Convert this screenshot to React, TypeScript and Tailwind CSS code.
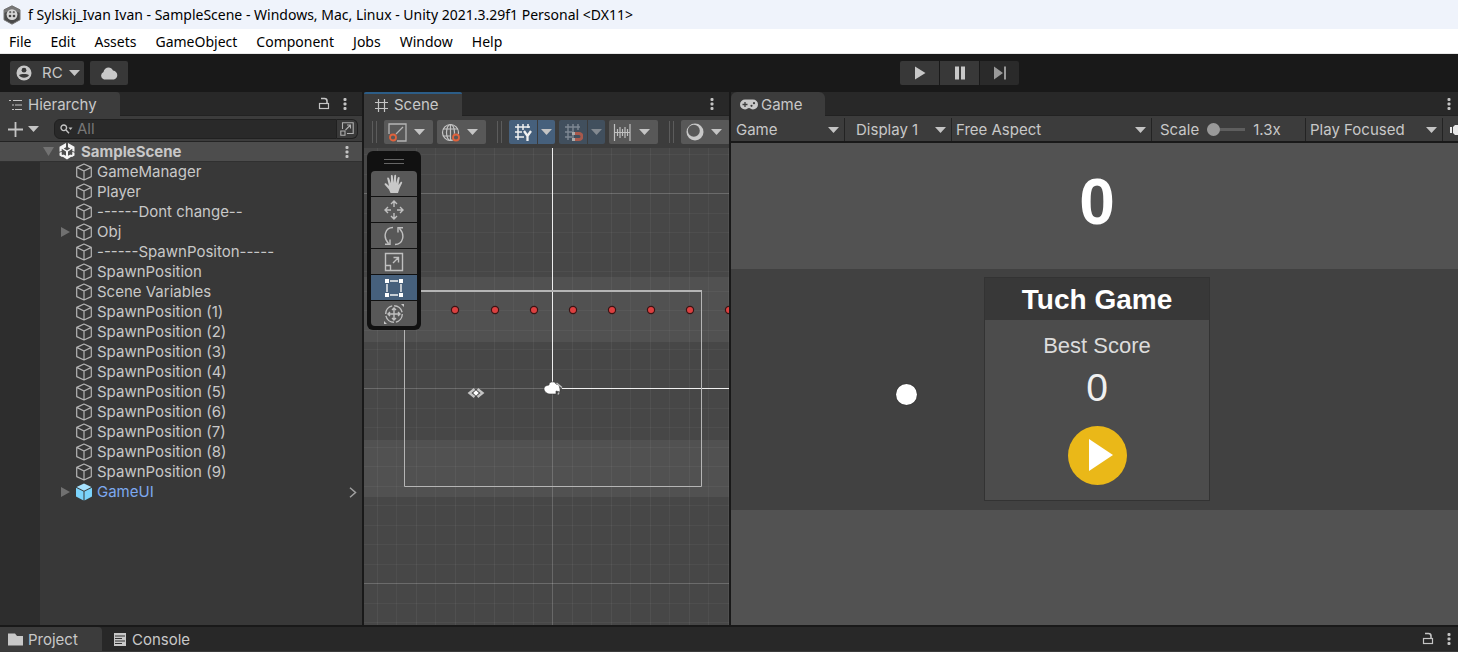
import type { ReactNode } from "react";

const menus = ["File", "Edit", "Assets", "GameObject", "Component", "Jobs", "Window", "Help"];

type Item = { name: string; expandable?: boolean; prefab?: boolean };

const items: Item[] = [
  { name: "GameManager" },
  { name: "Player" },
  { name: "------Dont change--" },
  { name: "Obj", expandable: true },
  { name: "------SpawnPositon-----" },
  { name: "SpawnPosition" },
  { name: "Scene Variables" },
  ...Array.from({ length: 9 }, (_, i) => ({ name: `SpawnPosition (${i + 1})` })),
  { name: "GameUI", expandable: true, prefab: true },
];

function Caret({ className = "" }: { className?: string }) {
  return (
    <svg width="11" height="6" viewBox="0 0 11 6" className={`shrink-0 ${className}`} aria-hidden="true">
      <path d="M0 0h11L5.5 6z" fill="#c4c4c4" />
    </svg>
  );
}

function Kebab() {
  return (
    <svg width="4" height="14" viewBox="0 0 4 14" fill="#c4c4c4" aria-hidden="true">
      <rect x="0.5" y="1" width="3" height="3" rx="1" />
      <rect x="0.5" y="5.5" width="3" height="3" rx="1" />
      <rect x="0.5" y="10" width="3" height="3" rx="1" />
    </svg>
  );
}

function Lock() {
  return (
    <svg width="12" height="14" viewBox="0 0 12 14" fill="none" stroke="#c4c4c4" strokeWidth="1.2" aria-hidden="true">
      <rect x="1.5" y="6.500" width="9" height="5" />
      <path d="M3 1.500h3.500a2.500 2.500 0 0 1 2.500 2.500v2.500" strokeWidth="1.600" />
    </svg>
  );
}

function Cube({ prefab }: { prefab?: boolean }) {
  if (prefab) {
    return (
      <svg width="18" height="18" viewBox="0 0 18 18" aria-hidden="true">
        <path d="M9 0.6l7.4 3.4L9 7.8 1.6 4z" fill="#a6e2ff" />
        <path d="M1 4.8l7.5 3.8v8.8L1 13.6zM17 4.8L9.5 8.6v8.8l7.5-3.8z" fill="#7bd3fb" />
      </svg>
    );
  }
  return (
    <svg width="18" height="18" viewBox="0 0 18 18" fill="none" stroke="#b4b4b4" strokeWidth="1.2" strokeLinejoin="round" aria-hidden="true">
      <path d="M9 1l7.3 3.4v9.2L9 17l-7.3-3.4V4.4zM1.7 4.4L9 8l7.3-3.6M9 8v9" />
    </svg>
  );
}

function UnityMark() {
  return (
    <svg width="16" height="17" viewBox="0 0 16 17" fill="#f4f4f4" aria-hidden="true">
      <path d="M7 0v4.200L4.700 5.500 8 7.400l3.300-1.900L9 4.200V0l6.500 3.800v5L13.300 8V5.800L9 8.600v4.200l2.500-1.400 2.200 1.300L8 16.500l-5.700-3.800 2.200-1.300L7 12.800V8.600L2.700 5.800V8L0.500 8.800v-5z" />
      <path d="M0.500 9.800l2.200-1v2.700l2.300 1.300-2 1.200-2.500-1.500zM15.500 9.800l-2.200-1v2.700L11 12.800l2 1.200 2.500-1.500z" />
    </svg>
  );
}

function WindowIcon() {
  return (
    <svg width="18" height="20" viewBox="0 0 18 20" aria-hidden="true">
      <path d="M9 0.8l8 4v10L9 19.2l-8-4.4v-10z" fill="#4a4a4a" stroke="#777" strokeWidth="1" />
      <path d="M1 5l8-4 8 4v3l-8-3-8 3z" fill="#777" />
      <circle cx="9" cy="9.6" r="5.400" fill="#d5d5d5" />
      <circle cx="7.200" cy="7.200" r="1.100" fill="#666" />
      <circle cx="10.800" cy="7.200" r="1.100" fill="#666" />
      <circle cx="7" cy="11" r="1.300" fill="#444" />
      <circle cx="11" cy="11" r="1.300" fill="#444" />
    </svg>
  );
}

function Handle() {
  return <span className="h-[22px] w-[5px] shrink-0 border-x border-[#5c5c5c]" />;
}

function ToolGroup({ children }: { children: ReactNode }) {
  return (
    <div className="flex shrink-0 items-center gap-[7px]">
      <Handle />
      <div className="flex gap-1">{children}</div>
    </div>
  );
}

function DropButton({ label, children }: { label: string; children: ReactNode }) {
  return (
    <button aria-label={label} className="flex h-6 w-[49px] shrink-0 items-center justify-between rounded-xs bg-[#585858] pr-2 pl-1">
      {children}
      <Caret />
    </button>
  );
}

function SplitButton({ label, dim, children }: { label: string; dim?: boolean; children: ReactNode }) {
  const tone = dim ? "bg-[#414f5d]" : "bg-[#46607c]";
  return (
    <div className="flex gap-px">
      <button aria-label={label} className={`flex h-6 w-7 items-center justify-center rounded-l-xs ${tone}`}>
        {children}
      </button>
      <button aria-label={`${label} options`} className={`flex h-6 w-[17px] items-center justify-center rounded-r-xs ${tone}`}>
        <Caret className={dim ? "opacity-50" : ""} />
      </button>
    </div>
  );
}

function HierarchyPanel() {
  return (
    <section className="flex min-w-0 flex-col bg-[#383838]">
      <header className="flex h-6 shrink-0 bg-[#282828]">
        <button className="flex w-[120px] items-center gap-[5px] rounded-tr-sm bg-[#3c3c3c] pt-px pl-[9px]">
          <svg width="14" height="12" viewBox="0 0 14 12" stroke="#c4c4c4" strokeWidth="1.2" aria-hidden="true">
            <path d="M0 1.5h2M4 1.5h9M3 6h2M6 6h7M3 10.5h2M6 10.5h7" />
          </svg>
          Hierarchy
        </button>
        <div className="flex flex-1 items-center justify-end gap-[13px] border-b border-[#222] pr-[15px]">
          <button aria-label="Lock hierarchy"><Lock /></button>
          <button aria-label="Hierarchy menu"><Kebab /></button>
        </div>
      </header>
      <div className="flex h-[26px] shrink-0 items-center border-b border-[#232323] bg-[#3c3c3c] pt-px pr-1 pl-2">
        <button aria-label="Create object" className="mr-[15px] flex items-center gap-[5px]">
          <svg width="15" height="15" viewBox="0 0 15 15" stroke="#c4c4c4" strokeWidth="1.8" aria-hidden="true">
            <path d="M7.5 0v15M0 7.5h15" />
          </svg>
          <Caret />
        </button>
        <div className="flex h-5 min-w-0 flex-1 items-center gap-1 rounded-l-md border border-[#202020] bg-[#292929] pl-[5px]">
          <svg width="13" height="10" viewBox="0 0 13 10" fill="none" stroke="#c4c4c4" strokeWidth="1.4" aria-hidden="true">
            <circle cx="3.8" cy="3.8" r="2.8" />
            <path d="M6 6l3 3.2" />
            <path d="M8.5 3.500h4L10.5 6z" fill="#c4c4c4" stroke="none" />
          </svg>
          <input type="text" aria-label="Search hierarchy" placeholder="All" className="h-[18px] min-w-0 flex-1 bg-transparent leading-[18px] outline-none placeholder:text-[#777]" />
        </div>
        <button aria-label="Open search window" className="flex h-5 w-[21px] items-center justify-center rounded-r-md border border-l-0 border-[#202020] bg-[#3a3a3a]">
          <svg width="14" height="14" viewBox="0 0 14 14" fill="none" stroke="#b0b0b0" strokeWidth="1.1" aria-hidden="true">
            <path d="M2.5 7V0.8h10.7v10.7H7M0.8 9h4.2v4.2H0.8zM5.5 8l5-5M7 3h3.5v3.5" />
          </svg>
        </button>
      </div>
      <div className="flex h-5 shrink-0 items-center border-b border-[#303030] bg-[#4d4d4d] pr-[13px] pl-[43px]">
        <button aria-label="Collapse SampleScene">
          <svg width="11" height="9" viewBox="0 0 11 9" aria-hidden="true"><path d="M0 0h11L5.500 9z" fill="#727272" /></svg>
        </button>
        <span className="mr-1.5 ml-[5px]"><UnityMark /></span>
        <span className="flex-1 font-bold">SampleScene</span>
        <button aria-label="Scene menu"><Kebab /></button>
      </div>
      <div className="flex flex-1">
        <div className="w-10 shrink-0 bg-[#2d2d2d]" />
        <ul className="min-w-0 flex-1">
          {items.map((item) => (
            <li key={item.name} className="flex h-5 items-center pr-[5px] pl-5">
              <span className="flex w-[15px] items-center">
                {item.expandable && (
                  <button aria-label={`Expand ${item.name}`}>
                    <svg width="10" height="10" viewBox="0 0 10 10" aria-hidden="true"><path d="M1 0l9 5-9 5z" fill="#707070" /></svg>
                  </button>
                )}
              </span>
              <Cube prefab={item.prefab} />
              <span className={`ml-1 flex-1 whitespace-nowrap ${item.prefab ? "text-[#7da9ef]" : ""}`}>{item.name}</span>
              {item.prefab && (
                <button aria-label="Open prefab">
                  <svg width="8" height="11" viewBox="0 0 8 11" fill="none" stroke="#a0a0a0" strokeWidth="1.5" aria-hidden="true"><path d="M1 0.800l5.500 4.700L1 10.200" /></svg>
                </button>
              )}
            </li>
          ))}
        </ul>
      </div>
    </section>
  );
}

const tools: { name: string; active?: boolean; icon: ReactNode }[] = [
  {
    name: "View tool",
    icon: (
      <g>
        <path d="M6.500 19L5 15.500 0.800 10.800c-.8-1 .5-1.900 1.500-1.200L5 12 3.200 4.500c-.2-1.200 1.400-1.500 1.800-.4L7 9.200 6.900 2c0-1.300 1.800-1.300 1.900 0l.6 6.800L10.300 1.500c.2-1.200 1.900-1.100 1.800.2L12 9.200l1.800-5.600c.4-1.200 2-.8 1.800.4L14.500 11l2-2.800c.8-1 2.100-.2 1.600.9L15.500 14.500l-1.500 4.500z" fill="#c8c8c8" stroke="none" />
      </g>
    ),
  },
  {
    name: "Move tool",
    icon: <path d="M10 1v6M7 4l3-3 3 3M10 19v-6M7 16l3 3 3-3M1 10h6M4 7l-3 3 3 3M19 10h-6M16 7l3 3-3 3" />,
  },
  {
    name: "Rotate tool",
    icon: <path d="M9 1.500C1 1.500-1.500 11 4.500 17.500M1 18.200h5V13.500M11 18.500c8 0 10.500-9.500 4.500-16M19 1.800h-5v4.700" />,
  },
  {
    name: "Scale tool",
    icon: <path d="M1.500 1.500h17v17h-17zM1.500 13.500h5v5M9 11l5-5M9.500 5.500h5v5" />,
  },
  {
    name: "Rect tool",
    active: true,
    icon: (
      <g stroke="#f2f2f2">
        <path d="M6 3h8M6 17h8M3 6v8M17 6v8" />
        <path d="M1 1h4v4H1zM15 1h4v4h-4zM1 15h4v4H1zM15 15h4v4h-4z" fill="#fff" stroke="none" />
      </g>
    ),
  },
  {
    name: "Transform tool",
    icon: (
      <g>
        <circle cx="10" cy="10" r="8.300" strokeDasharray="11 2" />
        <path d="M10 4v12M4 10h12M8 6l2-2 2 2M8 14l2 2 2-2M6 8l-2 2 2 2M14 8l2 2-2 2" />
        <path d="M17 0h3v3zM0 17v3h3z" fill="#c8c8c8" stroke="none" />
      </g>
    ),
  },
];

function SceneCanvas() {
  const columns = Array.from({ length: 60 }, (_, i) => i - 9).filter((n) => n !== 0);
  const rows = Array.from({ length: 60 }, (_, i) => i - 12);
  const dots = [52, 91, 131, 170, 209, 248, 287, 326, 365];
  return (
    <svg width="100%" height="100%" className="block" role="img" aria-label="Scene view">
      <rect width="100%" height="100%" fill="#474747" />
      <rect y="129" width="100%" height="65" fill="#515151" />
      <rect y="292" width="100%" height="57" fill="#515151" />
      <g fill="#fff">
        {columns.map((n) => (
          <rect key={n} x={Math.round(188 + n * 19.5)} width="1" height="100%" opacity={n % 2 ? 0.05 : 0.04} />
        ))}
        {rows.map((n) => (
          <rect key={n} y={Math.round(240 + n * 19.5)} width="100%" height="1" opacity={n % 10 ? 0.045 : 0.2} />
        ))}
        <rect x="188" y="240" width="1" height="100%" opacity="0.18" />
        <rect x="188" width="1" height="240" opacity="0.9" />
        <rect x="198" y="240" width="100%" height="1" opacity="0.9" />
      </g>
      <path d="M40.500 143v195.500h297V143" fill="none" stroke="#b5b5b5" />
      <rect x="40" y="142" width="298" height="2" fill="#b5b5b5" />
      {dots.map((x) => (
        <circle key={x} cx={x} cy="162" r="3.600" fill="#dc4040" stroke="#3a1414" strokeWidth="1.200" />
      ))}
      <g fill="none" stroke="#c4c4c4" strokeWidth="2.400">
        <path d="M110.500 241l-5 4 5 4M113.500 241l5 4-5 4" />
        <path d="M112 242.200l2.800 2.800-2.800 2.800-2.800-2.800z" fill="#fff" stroke="none" />
      </g>
      <path d="M180 240.500c0-2 2-3 5-3.500 0-4 6-4 7-1l3 1 1 4v3l-4-1v3h-6c-3 0-6-2.500-6-5.500z" fill="#fff" stroke="#3a3a3a" strokeWidth="0.600" />
      <path d="M192.500 235l5.500 4.500M194 246.500l1-2" stroke="#bbb" strokeWidth="1.500" />
    </svg>
  );
}

function ScenePanel() {
  return (
    <section className="flex min-w-0 flex-col bg-[#3c3c3c]">
      <header className="flex h-6 shrink-0 bg-[#282828]">
        <button className="flex w-[98px] items-center gap-1.5 rounded-t-xs border-t-2 border-[#2c5d87] bg-[#3c3c3c] pl-[11px]">
          <svg width="13" height="13" viewBox="0 0 13 13" stroke="#c4c4c4" strokeWidth="1.2" aria-hidden="true"><path d="M3.500 0v13M9.500 0v13M0 3.500h13M0 9.500h13" /></svg>
          Scene
        </button>
        <div className="flex flex-1 items-center justify-end border-b border-[#222] pr-[15px]">
          <button aria-label="Scene view menu"><Kebab /></button>
        </div>
      </header>
      <div className="flex h-8 shrink-0 items-center gap-[11px] overflow-hidden pl-2">
        <ToolGroup>
          <DropButton label="Tool pivot">
            <svg width="19" height="19" viewBox="0 0 19 19" fill="none" stroke="#b4b4b4" strokeWidth="1.300" aria-hidden="true">
              <path d="M1 11V1h17v17H9M8 11l7-7" />
              <circle cx="5" cy="14.500" r="3" stroke="#e0623c" strokeWidth="1.800" />
            </svg>
          </DropButton>
          <DropButton label="Tool rotation">
            <svg width="20" height="19" viewBox="0 0 20 19" fill="none" stroke="#c4c4c4" strokeWidth="1.200" aria-hidden="true">
              <circle cx="9.500" cy="9.500" r="8" />
              <ellipse cx="9.500" cy="9.500" rx="4" ry="8" />
              <path d="M9.500 1.500v16M2 6h15M2 13h8" />
              <circle cx="15" cy="14.500" r="4" fill="#585858" stroke="none" />
              <circle cx="15" cy="14.500" r="3" stroke="#e0623c" strokeWidth="1.800" />
            </svg>
          </DropButton>
        </ToolGroup>
        <ToolGroup>
          <SplitButton label="Grid visibility">
            <svg width="19" height="19" viewBox="0 0 19 19" fill="none" stroke="#f0f0f0" strokeWidth="1.500" aria-hidden="true">
              <path d="M4 1v16M9 1v6M14 1v4M1 4h15M1 9h7M1 14h9" />
              <path d="M10 8l3.500 5L17 8M13.500 13v5" strokeWidth="2.300" />
            </svg>
          </SplitButton>
          <SplitButton label="Grid snapping" dim>
            <svg width="19" height="19" viewBox="0 0 19 19" fill="none" stroke="#7e8893" strokeWidth="1.400" aria-hidden="true">
              <path d="M4 1v16M9 1v16M14 1v6M1 4h15M1 9h7M1 14h7" />
              <path d="M11 10.500h4a2.800 2.800 0 0 1 0 6h-4" stroke="#a7594c" strokeWidth="3" />
              <path d="M8 10.500h3M8 16.500h3" stroke="#aaa" strokeWidth="3" />
            </svg>
          </SplitButton>
          <DropButton label="Snap increment">
            <svg width="18" height="17" viewBox="0 0 18 17" stroke="#c0c0c0" strokeWidth="1.200" aria-hidden="true"><path d="M1.500 0v17M4.500 5v7M7 3v11M9.500 5v7M12 3v11M14.500 5v7M17 0v17M1 8.500h16" /></svg>
          </DropButton>
        </ToolGroup>
        <ToolGroup>
          <DropButton label="Draw mode">
            <svg width="20" height="18" viewBox="0 0 20 18" aria-hidden="true">
              <circle cx="10" cy="9" r="8.500" fill="#c8c8c8" />
              <circle cx="8.800" cy="7.800" r="6" fill="#585858" />
            </svg>
          </DropButton>
        </ToolGroup>
      </div>
      <div className="relative min-h-0 flex-1 overflow-hidden">
        <div className="absolute inset-0"><SceneCanvas /></div>
        <div className="absolute top-[3px] left-[3px] rounded-md bg-[#111] px-1 pb-1">
          <div className="flex h-5 items-center justify-center"><span className="h-[5px] w-5 border-y border-[#666]" /></div>
          <div className="flex flex-col gap-px overflow-hidden rounded-sm">
            {tools.map((tool) => (
              <button key={tool.name} aria-label={tool.name} className={`flex h-[25px] w-[46px] items-center justify-center ${tool.active ? "bg-[#46607c]" : "bg-[#585858]"}`}>
                <svg width="20" height="20" viewBox="0 0 20 20" fill="none" stroke="#c0c0c0" strokeWidth="1.400" aria-hidden="true">{tool.icon}</svg>
              </button>
            ))}
          </div>
        </div>
      </div>
    </section>
  );
}

function BarSelect({ label, value, className }: { label: string; value: string; className: string }) {
  return (
    <div className={`relative flex items-center border-r border-[#232323] ${className}`}>
      <select aria-label={label} className="w-full appearance-none bg-transparent leading-5 outline-none" defaultValue={value}>
        <option>{value}</option>
      </select>
      <Caret className="pointer-events-none absolute right-[5px]" />
    </div>
  );
}

function GamePanel() {
  return (
    <section className="flex min-w-0 flex-col bg-[#3c3c3c]">
      <header className="flex h-6 shrink-0 bg-[#282828]">
        <button className="flex w-[94px] items-center gap-[3px] rounded-t-md bg-[#3c3c3c] pt-px pl-[9px]">
          <svg width="18" height="11" viewBox="0 0 18 11" aria-hidden="true">
            <path d="M5 0.500h8a5 5 0 0 1 0 10c-2 0-2.500-1.500-4-1.500s-2 1.500-4 1.500a5 5 0 0 1 0-10z" fill="#c8c8c8" />
            <path d="M5 3v5M2.500 5.500h5" stroke="#3c3c3c" strokeWidth="1.300" />
            <circle cx="11.500" cy="6.800" r="1.100" fill="#3c3c3c" />
            <circle cx="14" cy="4.200" r="1.100" fill="#3c3c3c" />
          </svg>
          Game
        </button>
        <div className="flex flex-1 items-center justify-end border-b border-[#222] pr-[7px]">
          <button aria-label="Game view menu"><Kebab /></button>
        </div>
      </header>
      <div className="flex h-[27px] shrink-0 overflow-hidden border-b-2 border-[#191919] pt-0.5">
        <BarSelect label="View" value="Game" className="w-[114px] pl-[5px]" />
        <BarSelect label="Display" value="Display 1" className="w-[107px] pl-[11px]" />
        <BarSelect label="Aspect ratio" value="Free Aspect" className="min-w-0 flex-1 pl-1" />
        <div className="flex w-[154px] items-center gap-2 border-r border-[#232323] pl-2">
          <label htmlFor="scale">Scale</label>
          <input
            id="scale"
            type="range"
            min="1"
            max="50"
            step="0.1"
            defaultValue="1.3"
            className="h-3 w-[38px] appearance-none bg-transparent [&::-webkit-slider-runnable-track]:h-[3px] [&::-webkit-slider-runnable-track]:bg-[#5e5e5e] [&::-webkit-slider-thumb]:-mt-[5px] [&::-webkit-slider-thumb]:size-[13px] [&::-webkit-slider-thumb]:appearance-none [&::-webkit-slider-thumb]:rounded-full [&::-webkit-slider-thumb]:bg-[#999]"
          />
          <span>1.3x</span>
        </div>
        <BarSelect label="Play mode" value="Play Focused" className="w-[137px] pl-1" />
        <button aria-label="Mute audio" className="flex w-[15px] items-center justify-end overflow-hidden">
          <svg width="8" height="12" viewBox="0 0 8 12" fill="#e8e8e8" aria-hidden="true"><path d="M0 3h2v6H0zM3 3l2-2h3v10H5L3 9z" /></svg>
        </button>
      </div>
      <div className="flex flex-1 flex-col font-['Liberation_Sans',sans-serif] text-white">
        <div className="flex flex-[126] items-center justify-center bg-[#525252] pl-[5px] text-[64px] leading-none font-bold">
          <span className="pb-2">0</span>
        </div>
        <div className="relative flex flex-[242] items-center justify-center bg-[#414141] pl-[5px]">
          <div className="flex w-[226px] flex-col items-center border border-[#333] bg-[#4c4c4c]">
            <h1 className="flex h-[42px] w-full items-center justify-center bg-[#383838] pt-0.5 text-[28px] leading-none font-bold">Tuch Game</h1>
            <p className="mt-3.5 text-[22px] leading-6 text-[#dcdcdc]">Best Score</p>
            <p className="mt-2.5 text-[39px] leading-[40px] text-[#f0f0f0]">0</p>
            <button aria-label="Play" className="mt-[18px] mb-[15px]">
              <svg width="59" height="59" viewBox="0 0 59 59" className="block" aria-hidden="true">
                <circle cx="29.500" cy="29.500" r="29.500" fill="#eab818" />
                <path d="M21 13v32l24-16z" fill="#fff" />
              </svg>
            </button>
          </div>
          <span className="absolute top-1/2 left-[calc(24%-9px)] size-[21px] rounded-full bg-white -translate-y-[5px] shadow-[0_0_1px_#000]" />
        </div>
        <div className="flex-[115] bg-[#525252]" />
      </div>
    </section>
  );
}

export default function App() {
  return (
    <main className="flex h-screen min-h-[560px] flex-col overflow-hidden bg-[#191919] font-['Inter',sans-serif] text-[15px] leading-5 text-[#c8c8c8]">
      <div className="flex h-[29px] shrink-0 items-center gap-[7px] bg-[#eff3fb] pl-[3px] font-['Noto_Sans',sans-serif] text-sm text-black">
        <WindowIcon />
        <span className="whitespace-nowrap">f Sylskij_Ivan Ivan - SampleScene - Windows, Mac, Linux - Unity 2021.3.29f1 Personal &lt;DX11&gt;</span>
      </div>
      <nav className="flex h-[25px] shrink-0 items-center gap-[19px] border-b border-[#e8e8e8] bg-white pt-px pl-[9px] font-['Noto_Sans',sans-serif] text-sm text-black">
        {menus.map((menu) => (
          <button key={menu}>{menu}</button>
        ))}
      </nav>
      <div className="flex h-[38px] shrink-0 items-center gap-1.5 pl-2.5">
        <button className="flex h-6 w-[74px] items-center rounded-xs bg-[#383838] pr-1 pl-1.5">
          <svg width="16" height="16" viewBox="0 0 16 16" aria-hidden="true">
            <circle cx="8" cy="8" r="7.500" fill="#c8c8c8" />
            <circle cx="8" cy="5.200" r="2.400" fill="#383838" />
            <path d="M3 10c1.500-1.500 8.500-1.500 10 0-1.500 3.500-8.500 3.500-10 0z" fill="#383838" />
          </svg>
          <span className="flex-1 pl-2.5 text-left">RC</span>
          <Caret />
        </button>
        <button aria-label="Cloud services" className="flex h-6 w-[38px] items-center justify-center rounded-xs bg-[#383838]">
          <svg width="18" height="14" viewBox="0 0 18 14" aria-hidden="true"><path d="M4 13.500a4 4 0 0 1-.5-7.500C4 1 11-.5 13 4.500c5 .5 6 7.500 1 9z" fill="#c8c8c8" /></svg>
        </button>
        <div className="mr-[439px] ml-auto flex gap-px">
          <button aria-label="Play mode" className="flex h-6 w-[39px] items-center justify-center rounded-l-xs bg-[#383838]">
            <svg width="12" height="14" viewBox="0 0 12 14" aria-hidden="true"><path d="M1 0.500l10.500 6.500L1 13.500z" fill="#c8c8c8" /></svg>
          </button>
          <button aria-label="Pause" className="flex h-6 w-[39px] items-center justify-center bg-[#383838]">
            <svg width="12" height="14" viewBox="0 0 12 14" fill="#c8c8c8" aria-hidden="true"><path d="M1 0.500h4v13H1zM7 0.500h4v13H7z" /></svg>
          </button>
          <button aria-label="Step" className="flex h-6 w-[39px] items-center justify-center rounded-r-xs bg-[#2a2a2a]">
            <svg width="14" height="14" viewBox="0 0 14 14" fill="#999" aria-hidden="true"><path d="M1 0.500L10 7l-9 6.500zM11 0.500h2v13h-2z" /></svg>
          </button>
        </div>
      </div>
      <div className="grid min-h-0 flex-1 grid-cols-[362fr_365fr_727fr] gap-0.5">
        <HierarchyPanel />
        <ScenePanel />
        <GamePanel />
      </div>
      <footer className="mt-0.5 flex h-[25px] shrink-0 items-stretch border-b border-[#3a3a3a] bg-[#282828]">
        <button className="flex w-[102px] items-center gap-[5px] rounded-tr-sm bg-[#3c3c3c] pt-px pl-2">
          <svg width="15" height="13" viewBox="0 0 15 13" aria-hidden="true"><path d="M0 0.500h7l2 2.500h6v9.500H0z" fill="#c8c8c8" /></svg>
          Project
        </button>
        <button className="flex items-center gap-1.5 pt-px pl-3">
          <svg width="12" height="13" viewBox="0 0 12 13" aria-hidden="true">
            <rect width="12" height="13" fill="#c8c8c8" />
            <path d="M1 3h10M1 5.500h7M1 8h10M1 10.500h7" stroke="#333" strokeWidth="1.100" />
          </svg>
          Console
        </button>
        <div className="ml-auto flex items-center gap-[13px] pr-[7px]">
          <button aria-label="Lock project"><Lock /></button>
          <button aria-label="Project menu"><Kebab /></button>
        </div>
      </footer>
    </main>
  );
}
